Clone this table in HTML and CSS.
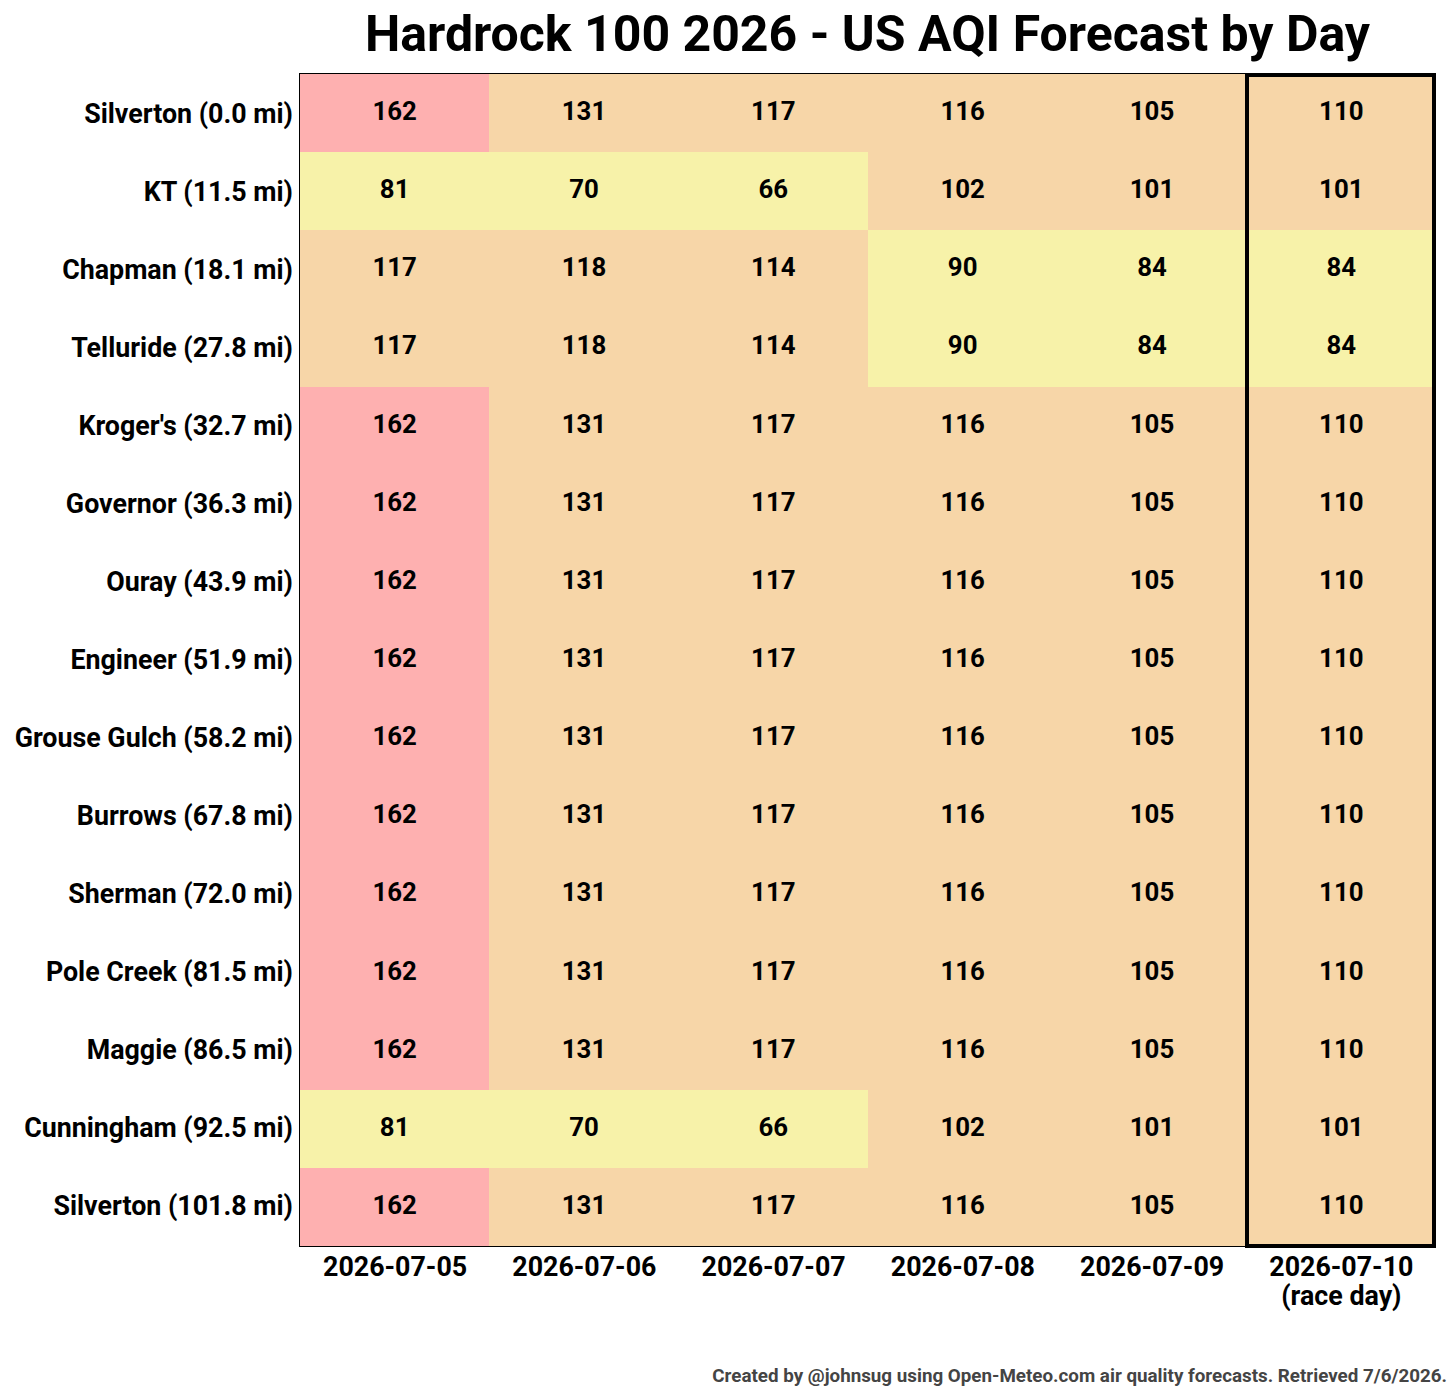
FILE: index.html
```html
<!DOCTYPE html>
<html lang="en">
<head>
<meta charset="utf-8">
<title>Hardrock 100 2026 - US AQI Forecast by Day</title>
<link rel="stylesheet" href="styles.css">
</head>
<body>
<div class="figure">
  <h1 class="title">Hardrock 100 2026 - US AQI Forecast by Day</h1>
  <div class="plot">
    <div class="ylabels">
      <div class="ylabel">Silverton (0.0 mi)</div>
      <div class="ylabel">KT (11.5 mi)</div>
      <div class="ylabel">Chapman (18.1 mi)</div>
      <div class="ylabel">Telluride (27.8 mi)</div>
      <div class="ylabel">Kroger's (32.7 mi)</div>
      <div class="ylabel">Governor (36.3 mi)</div>
      <div class="ylabel">Ouray (43.9 mi)</div>
      <div class="ylabel">Engineer (51.9 mi)</div>
      <div class="ylabel">Grouse Gulch (58.2 mi)</div>
      <div class="ylabel">Burrows (67.8 mi)</div>
      <div class="ylabel">Sherman (72.0 mi)</div>
      <div class="ylabel">Pole Creek (81.5 mi)</div>
      <div class="ylabel">Maggie (86.5 mi)</div>
      <div class="ylabel">Cunningham (92.5 mi)</div>
      <div class="ylabel">Silverton (101.8 mi)</div>
    </div>
    <div class="axes">
      <div class="heatmap">
        <div class="cell red">162</div><div class="cell orange">131</div><div class="cell orange">117</div><div class="cell orange">116</div><div class="cell orange">105</div><div class="cell orange">110</div>
        <div class="cell yellow">81</div><div class="cell yellow">70</div><div class="cell yellow">66</div><div class="cell orange">102</div><div class="cell orange">101</div><div class="cell orange">101</div>
        <div class="cell orange">117</div><div class="cell orange">118</div><div class="cell orange">114</div><div class="cell yellow">90</div><div class="cell yellow">84</div><div class="cell yellow">84</div>
        <div class="cell orange">117</div><div class="cell orange">118</div><div class="cell orange">114</div><div class="cell yellow">90</div><div class="cell yellow">84</div><div class="cell yellow">84</div>
        <div class="cell red">162</div><div class="cell orange">131</div><div class="cell orange">117</div><div class="cell orange">116</div><div class="cell orange">105</div><div class="cell orange">110</div>
        <div class="cell red">162</div><div class="cell orange">131</div><div class="cell orange">117</div><div class="cell orange">116</div><div class="cell orange">105</div><div class="cell orange">110</div>
        <div class="cell red">162</div><div class="cell orange">131</div><div class="cell orange">117</div><div class="cell orange">116</div><div class="cell orange">105</div><div class="cell orange">110</div>
        <div class="cell red">162</div><div class="cell orange">131</div><div class="cell orange">117</div><div class="cell orange">116</div><div class="cell orange">105</div><div class="cell orange">110</div>
        <div class="cell red">162</div><div class="cell orange">131</div><div class="cell orange">117</div><div class="cell orange">116</div><div class="cell orange">105</div><div class="cell orange">110</div>
        <div class="cell red">162</div><div class="cell orange">131</div><div class="cell orange">117</div><div class="cell orange">116</div><div class="cell orange">105</div><div class="cell orange">110</div>
        <div class="cell red">162</div><div class="cell orange">131</div><div class="cell orange">117</div><div class="cell orange">116</div><div class="cell orange">105</div><div class="cell orange">110</div>
        <div class="cell red">162</div><div class="cell orange">131</div><div class="cell orange">117</div><div class="cell orange">116</div><div class="cell orange">105</div><div class="cell orange">110</div>
        <div class="cell red">162</div><div class="cell orange">131</div><div class="cell orange">117</div><div class="cell orange">116</div><div class="cell orange">105</div><div class="cell orange">110</div>
        <div class="cell yellow">81</div><div class="cell yellow">70</div><div class="cell yellow">66</div><div class="cell orange">102</div><div class="cell orange">101</div><div class="cell orange">101</div>
        <div class="cell red">162</div><div class="cell orange">131</div><div class="cell orange">117</div><div class="cell orange">116</div><div class="cell orange">105</div><div class="cell orange">110</div>
      </div>
      <div class="raceday"></div>
    </div>
  </div>
  <div class="xlabels">
    <div class="xlabel">2026-07-05</div>
    <div class="xlabel">2026-07-06</div>
    <div class="xlabel">2026-07-07</div>
    <div class="xlabel">2026-07-08</div>
    <div class="xlabel">2026-07-09</div>
    <div class="xlabel">2026-07-10<br>(race day)</div>
  </div>
  <p class="credit">Created by @johnsug using Open-Meteo.com air quality forecasts. Retrieved 7/6/2026.</p>
</div>
</body>
</html>
```
FILE: styles.css
```css
* {
  box-sizing: border-box;
}

html, body {
  margin: 0;
  padding: 0;
  background: #ffffff;
}

body {
  font-family: Roboto, "Liberation Sans", Arial, sans-serif;
  color: #000000;
}

.figure {
  width: 1456px;
  height: 1400px;
  overflow: hidden;
}

.title {
  margin: 0;
  height: 73px;
  padding: 6px 0 0 299px;
  width: 1436px;
  text-align: center;
  font-size: 50px;
  font-weight: 700;
  line-height: 56px;
  letter-spacing: 0;
  white-space: nowrap;
}

.plot {
  display: flex;
  height: 1174px;
}

.ylabels {
  width: 299px;
  flex: none;
  display: grid;
  grid-template-rows: repeat(15, 1fr);
  padding: 1.5px 6px 1.5px 0;
}

.ylabel {
  display: flex;
  align-items: center;
  justify-content: flex-end;
  font-size: 26.8px;
  font-weight: 700;
  white-space: nowrap;
}

.axes {
  position: relative;
  width: 1137px;
  flex: none;
  border-left: 1.5px solid #000;
  border-top: 1.5px solid #000;
  border-bottom: 1.5px solid #000;
}

.heatmap {
  display: grid;
  grid-template-columns: repeat(6, 1fr);
  grid-template-rows: repeat(15, 1fr);
  height: 100%;
}

.cell {
  display: flex;
  align-items: center;
  justify-content: center;
  font-size: 25.8px;
  font-weight: 700;
  padding-bottom: 4px;
}

.red {
  background: #feb0b0;
}

.orange {
  background: #f7d6a8;
}

.yellow {
  background: #f7f2a9;
}

.raceday {
  position: absolute;
  left: calc(83.333% - 2px);
  right: 0;
  top: -1.5px;
  bottom: -1.5px;
  border: 4px solid #000;
}

.xlabels {
  display: grid;
  grid-template-columns: repeat(6, 1fr);
  width: 1436px;
  padding-left: 300.5px;
  padding-top: 6px;
  height: 100px;
}

.xlabel {
  text-align: center;
  font-size: 26.8px;
  font-weight: 700;
  line-height: 29px;
  white-space: nowrap;
}

.credit {
  margin: 0;
  padding: 18px 9px 0 0;
  text-align: right;
  font-size: 18.8px;
  font-weight: 700;
  color: #444444;
  line-height: 22px;
  white-space: nowrap;
}
```
